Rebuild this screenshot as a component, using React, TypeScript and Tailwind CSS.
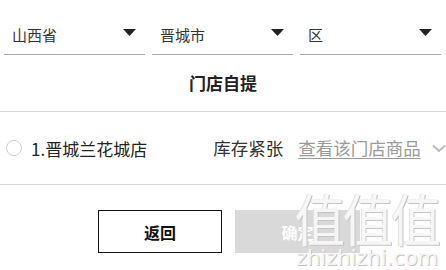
import React from "react";

const font = { fontFamily: '"Noto Sans CJK SC", "Noto Sans", sans-serif' };

function Select({ label }: { label: string }) {
  return (
    <div className="flex-1 h-[40px] flex items-center justify-between border-b border-[#a8a8a8] pl-[8px] pr-[8px]">
      <span className="text-[15px] text-[#333] leading-none">{label}</span>
      <svg width="13" height="7" viewBox="0 0 13 7" className="mr-[1px] mt-[-4px]">
        <path d="M0 0 L13 0 L6.5 7 Z" fill="#222" />
      </svg>
    </div>
  );
}

export default function App() {
  return (
    <div className="relative w-[446px] h-[270px] bg-white overflow-hidden" style={font}>
      <div className="flex gap-[7px] pl-[4px] pr-[5px] pt-[15px]">
        <Select label="山西省" />
        <Select label="晋城市" />
        <Select label="区" />
      </div>
      <div className="h-[57px] flex items-center justify-center border-b border-[#d6d6d6]">
        <span className="text-[17px] font-bold text-[#222] leading-none mt-[-1px]">门店自提</span>
      </div>
      <div className="h-[73px] flex items-center border-b border-[#d6d6d6] overflow-hidden whitespace-nowrap">
        <div className="shrink-0 w-[16px] h-[16px] rounded-full border border-[#cfcfcf] ml-[6px] mr-[9px]" />
        <span className="shrink-0 text-[17px] text-[#222] leading-none">1.晋城兰花城店</span>
        <span className="shrink-0 text-[17.5px] text-[#333] leading-none ml-[66px]">库存紧张</span>
        <span className="shrink-0 text-[17.5px] text-[#9a9a9a] leading-none underline underline-offset-[3px] ml-[15px]">查看该门店商品</span>
        <svg width="14" height="9" viewBox="0 0 14 9" className="shrink-0 ml-[11px]">
          <path d="M1 1.5 L7 7 L13 1.5" fill="none" stroke="#bbb" strokeWidth="2" />
        </svg>
      </div>
      <div className="flex pt-[25px] pl-[98px] gap-[13px]">
        <div className="w-[124px] h-[43px] border border-[#111] flex items-center justify-center">
          <span className="text-[16px] font-bold text-[#111]">返回</span>
        </div>
        <div className="w-[125px] h-[43px] bg-[#d9d9d9] flex items-center justify-center">
          <span className="text-[16px] font-bold text-white">确定</span>
        </div>
      </div>
      <div className="absolute left-[294px] top-[186px] w-[146px] flex flex-col items-center pointer-events-none select-none">
        <span
          className="text-[50px] leading-[60px] text-[#f6f6f6] tracking-[-2px]"
          style={{ textShadow: "1px 1px 0 #c4c4c4, -1px 0 0 #e2e2e2", transform: "scaleY(1.12)" }}
        >
          值值值
        </span>
        <span
          className="text-[21px] leading-[20px] text-[#f6f6f6] mt-[2px]"
          style={{ fontFamily: '"DejaVu Sans", sans-serif', textShadow: "1px 1px 0 #c4c4c4" }}
        >
          zhizhizhi.com
        </span>
      </div>
    </div>
  );
}
